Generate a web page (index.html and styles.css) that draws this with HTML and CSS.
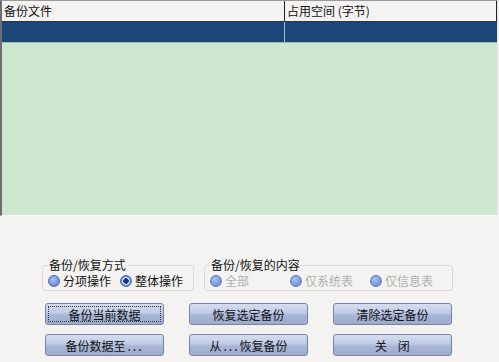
FILE: index.html
```html
<!DOCTYPE html>
<html lang="zh-CN">
<head>
  <meta charset="UTF-8">
  <meta name="viewport" content="width=device-width, initial-scale=1">
  <title>备份/恢复</title>
  <link rel="stylesheet" href="styles.css">
</head>
<body>
  <div class="list">
    <div class="row head">
      <div class="cell c1">备份文件</div>
      <div class="cell c2">占用空间 (字节)</div>
    </div>
    <div class="row sel">
      <div class="cell c1"></div>
      <div class="cell c2"></div>
    </div>
  </div>

  <div class="controls">
    <div class="groups">
      <fieldset class="group g1">
        <legend>备份/恢复方式</legend>
        <label class="opt"><span class="radio"></span>分项操作</label>
        <label class="opt"><span class="radio on"></span>整体操作</label>
      </fieldset>
      <fieldset class="group g2">
        <legend>备份/恢复的内容</legend>
        <label class="opt off"><span class="radio"></span>全部</label>
        <label class="opt off"><span class="radio"></span>仅系统表</label>
        <label class="opt off"><span class="radio"></span>仅信息表</label>
      </fieldset>
    </div>

    <div class="buttons">
      <button class="focus">备份当前数据</button>
      <button>恢复选定备份</button>
      <button>清除选定备份</button>
      <button>备份数据至<span class="dots">...</span></button>
      <button>从<span class="dots">...</span>恢复备份</button>
      <button>关&nbsp;&nbsp;&nbsp;&nbsp;闭</button>
    </div>
  </div>
</body>
</html>
```

FILE: styles.css
```css
* { box-sizing: border-box; margin:0; padding:0; }
body { font-family: "Noto Sans CJK SC", "Liberation Sans", sans-serif; font-size:12px; color:#111; background:#f4f3f1; width:499px; height:362px; overflow:hidden; }

.list { width:498px; height:216px; background:#cde8cf; border-top:1px solid #9a9a9a; border-left:2px solid #6e6e6e; border-right:1px solid #e6e6e6; border-bottom:1px solid #faf4f4; }
.row { display:flex; height:21px; }
.cell { line-height:20px; padding-left:2px; white-space:nowrap; }
.c1 { width:283px; }
.c2 { width:212px; }
.head { background:#f4f3f1; border-bottom:1px solid #333; }
.head .c1 { border-right:1px solid #222; }
.head .c2 { border-right:1px solid #222; }
.sel { background:#1b467a; border-bottom:1px solid #9fb8c8; }
.sel .c1 { border-right:1px solid #a8bfd0; }

.controls { padding-top:41px; }
.groups { display:flex; gap:10px; margin-left:42px; }
.group { border:1px solid #dedbd6; border-radius:3px; padding:0 2px 1px 5px; display:flex; height:34px; min-width:0; flex:none; }
.group legend { line-height:16px; padding:0 1px; margin-left:0; }
.g1 { width:152px; }
.g2 { width:249px; }
.opt { display:flex; align-items:center; gap:3px; height:16px; line-height:16px; flex:none; white-space:nowrap; }
.g1 .opt { width:72px; }
.g2 .opt { width:80px; }
.g1 .opt:last-of-type, .g2 .opt:last-of-type { width:auto; }
.opt.off { color:#b0b0b0; }

.radio { width:12px; height:12px; border-radius:50%; border:1px solid #4c6cb4; background:radial-gradient(circle at 40% 35%, #a9c0f0, #6d8fdc 70%, #5577c8); }
.radio.on { background:radial-gradient(circle, #17358a 0 2.5px, #dfe6f6 3px 3.5px, #6d8fdc 4px); }
.off .radio { border-color:#5a7ac0; background:radial-gradient(circle at 40% 35%, #a9c0f0, #7394de 70%, #6080cc); }

.buttons { display:grid; grid-template-columns:repeat(3, 119px); column-gap:25px; row-gap:9px; margin:12px 0 0 45px; }
button { height:22px; font:inherit; color:#111; border:1px solid #7684a8; border-radius:3px; background:linear-gradient(#d6def0, #bfcae4 45%, #a9b6d6 55%, #9eabcc); cursor:pointer; }
button.focus { outline:1px dotted #333; outline-offset:-4px; }
.dots { letter-spacing:2px; padding-left:2px; }
```
